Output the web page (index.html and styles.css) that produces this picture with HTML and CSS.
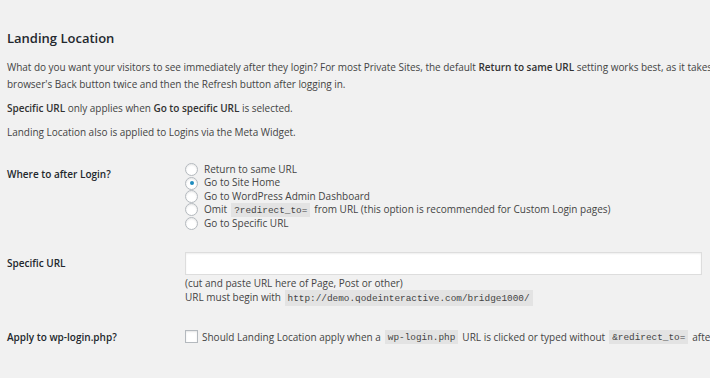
FILE: index.html
```html
<!DOCTYPE html>
<html lang="en">
<head>
    <meta charset="UTF-8">
    <meta name="viewport" content="width=device-width, initial-scale=1.0">
    <title>Landing Location</title>
    <link rel="stylesheet" href="styles.css">
</head>
<body>
    <div class="wrap">
        <h2 class="section-title">Landing Location</h2>

        <p class="intro">What do you want your visitors to see immediately after they login? For most Private Sites, the default <strong>Return to same URL</strong> setting works best, as it takes<br>browser's Back button twice and then the Refresh button after logging in.</p>
        <p class="intro"><strong>Specific URL</strong> only applies when <strong>Go to specific URL</strong> is selected.</p>
        <p class="intro">Landing Location also is applied to Logins via the Meta Widget.</p>

        <table class="form-table">
            <tbody>
                <tr class="row-radio">
                    <th>Where to after Login?</th>
                    <td>
                        <fieldset class="choices">
                            <label class="choice"><input type="radio" name="landing" value="return"> Return to same URL</label>
                            <label class="choice"><input type="radio" name="landing" value="home" checked> Go to Site Home</label>
                            <label class="choice"><input type="radio" name="landing" value="admin"> Go to WordPress Admin Dashboard</label>
                            <label class="choice"><input type="radio" name="landing" value="omit"> Omit <code>?redirect_to=</code> from URL (this option is recommended for Custom Login pages)</label>
                            <label class="choice"><input type="radio" name="landing" value="url"> Go to Specific URL</label>
                        </fieldset>
                    </td>
                </tr>
                <tr>
                    <th>Specific URL</th>
                    <td>
                        <input type="text" class="url-field" id="specific_url">
                        <p class="description">(cut and paste URL here of Page, Post or other)<br>URL must begin with <code>http://demo.qodeinteractive.com/bridge1000/</code></p>
                    </td>
                </tr>
                <tr class="row-check">
                    <th>Apply to wp-login.php?</th>
                    <td>
                        <label class="check"><input type="checkbox" name="wp_login"> Should Landing Location apply when a <code>wp-login.php</code> URL is clicked or typed without <code>&amp;redirect_to=</code> after</label>
                    </td>
                </tr>
            </tbody>
        </table>
    </div>
</body>
</html>
```

FILE: styles.css
```css
html, body {
    margin: 0;
    overflow: hidden;
}
body {
    font-family: "Open Sans", "Segoe UI", sans-serif;
    font-size: 10px;
    color: #444;
    background-color: #f1f1f1;
}
.wrap {
    width: 1100px;
    padding: 30px 0 0 7px;
}
.section-title {
    font-size: 13px;
    font-weight: 600;
    line-height: 17px;
    color: #23282d;
    margin: 0 0 12px;
}
.intro {
    line-height: 17px;
    margin: 7px 0;
    white-space: nowrap;
    letter-spacing: -0.03px;
}
strong {
    font-weight: 600;
    color: #333;
}
code {
    font-family: "Liberation Mono", "DejaVu Sans Mono", monospace;
    font-size: 9.4px;
    line-height: 1;
    background-color: #e3e3e3;
    padding: 3px 3px 2px;
    margin: 0 1px;
    color: #444;
}
.form-table {
    border-collapse: collapse;
    margin-top: 10px;
}
.form-table th {
    width: 178px;
    padding: 15px 0 0;
    text-align: left;
    vertical-align: top;
    font-weight: 600;
    line-height: 17px;
    color: #23282d;
}
.form-table td {
    padding: 12px 0;
    vertical-align: top;
}
.row-radio td {
    padding-bottom: 10px;
}
.choices {
    border: none;
    margin: 0;
    padding: 0;
}
.choice {
    display: flex;
    align-items: center;
    height: 13.4px;
    line-height: 13.4px;
    white-space: nowrap;
}
.choice code {
    margin: 0 4px;
}
input[type="radio"], input[type="checkbox"] {
    appearance: none;
    width: 13px;
    height: 13px;
    margin: 0 6px 0 0;
    border: 1px solid #b4b9be;
    background-color: #fff;
    box-shadow: inset 0 1px 2px rgba(0, 0, 0, 0.1);
    box-sizing: border-box;
    flex-shrink: 0;
}
input[type="radio"] {
    border-radius: 50%;
    display: grid;
    place-items: center;
}
input[type="radio"]:checked::before {
    content: "";
    width: 4px;
    height: 4px;
    border-radius: 50%;
    background-color: #1e8cbe;
}
.url-field {
    display: block;
    width: 517px;
    height: 23px;
    box-sizing: border-box;
    margin: 0 0 1px;
    border: 1px solid #ddd;
    background-color: #fff;
    box-shadow: inset 0 1px 2px rgba(0, 0, 0, 0.07);
}
.description {
    margin: 0;
    line-height: 14px;
}
.row-check th {
    padding-top: 13px;
}
.check {
    display: flex;
    align-items: center;
    height: 18px;
    white-space: nowrap;
}
.check input {
    margin-right: 4px;
}
.check code {
    margin: 0 4px;
}
```
